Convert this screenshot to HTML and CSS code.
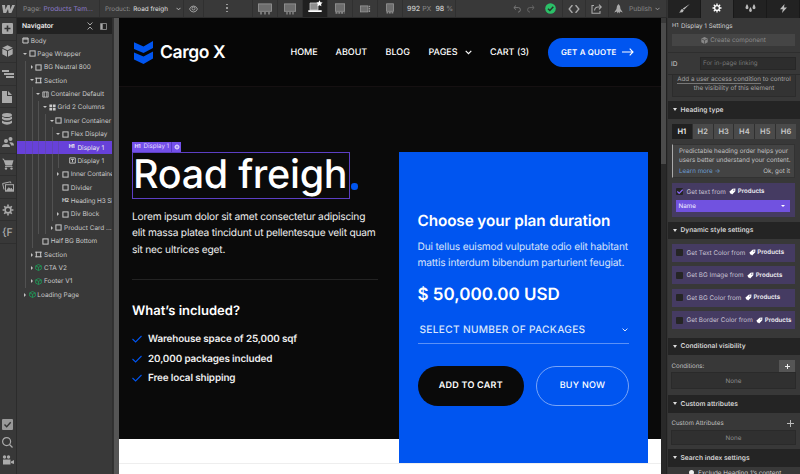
FILE: index.html
```html
<!DOCTYPE html>
<html lang="en">
<head>
<meta charset="utf-8">
<title>Designer</title>
<link rel="stylesheet" href="styles.css">
</head>
<body>
<svg width="0" height="0" class="defs">
<defs>
<symbol id="box" viewBox="0 0 7 7"><rect x=".9" y=".9" width="5.2" height="5.2" fill="none" stroke="currentColor"/></symbol>
<symbol id="body" viewBox="0 0 7 7"><path d="M.9 1h5.2v5H.9zM.9 2h5.2" fill="none" stroke="currentColor"/></symbol>
<symbol id="sec" viewBox="0 0 7 7"><path d="M.3 1.2h6.4M.3 5.8h6.4M1.3.8v5.4M5.7.8v5.4" fill="none" stroke="currentColor"/></symbol>
<symbol id="cont" viewBox="0 0 7 7"><path d="M.8.9h5.4v5.2H.8zM2.2 1v5M4.8 1v5" fill="none" stroke="currentColor" stroke-width=".8"/></symbol>
<symbol id="grid" viewBox="0 0 7 7"><path d="M.4.5h2.7v2.7H.4zM3.9.5h2.7v2.7H3.9zM.4 3.9h2.7v2.7H.4zM3.9 3.9h2.7v2.7H3.9z" fill="currentColor"/></symbol>
<symbol id="txt" viewBox="0 0 7 7"><path d="M.7.9h5.6v5.2H.7zM2 2.4h3M3.5 2.4v2.8" fill="none" stroke="currentColor" stroke-width=".9"/></symbol>
<symbol id="comp" viewBox="0 0 7 7"><path d="M3.5.5 6.3 1.9v3.2L3.5 6.5.7 5.1V1.9zM.7 1.9l2.8 1.4 2.8-1.4M3.5 3.3v3.2" fill="none" stroke="currentColor" stroke-width=".8"/></symbol>
<symbol id="gear" viewBox="0 0 12 12"><g fill="none" stroke="currentColor"><circle cx="6" cy="6" r="2.9" stroke-width="1.6"/><path d="M6 .6v2M6 9.4v2M.6 6h2M9.4 6h2M2.2 2.2l1.4 1.4M8.4 8.4l1.4 1.4M2.2 9.8l1.4-1.4M8.4 3.6l1.4-1.4" stroke-width="1.6"/></g></symbol>
<symbol id="tag" viewBox="0 0 7 7"><path d="M3.6.7 6.4.5 6.3 3.3 3.1 6.4 2 5.4 1.2 5.6.9 4.6.3 3.8z" fill="currentColor"/><circle cx="4.8" cy="2.1" r=".65" fill="#453b62"/></symbol>
<symbol id="check" viewBox="0 0 10 8"><path d="M.5 4 3.6 7 9.5 1" fill="none" stroke="currentColor" stroke-width="1.1"/></symbol>
<symbol id="chev" viewBox="0 0 6 4"><path d="M.6.6 3 3 5.4.6" fill="none" stroke="currentColor"/></symbol>
</defs>
</svg>
<div class="app">
<div class="left">
  <header class="top">
    <div class="w"><svg width="13" height="8" viewBox="0 0 13 8"><path d="M0 0h3l.4 4.6L5.5 0h2.3l.5 4.6L10.2 0H13L9.4 8H6.7L6 4 4.1 8H1.3z" fill="#aaa"/></svg></div>
    <div class="pg"><span class="t-page">Page:</span><span class="t-name">Products Tem...</span></div>
    <div class="prod"><span class="t-prod">Product:</span><span class="t-road">Road freigh</span><svg width="5" height="4"><use href="#chev"/></svg></div>
    <div class="eye"><svg width="9" height="8" viewBox="0 0 9 8" fill="none" stroke="#aaa" stroke-width=".9"><path d="M.5 4Q1.8 1 4.5 1T8.5 4Q7.200 7 4.5 7T.5 4z"/><circle cx="4.500" cy="3.500" r="1.500"/></svg></div>
    <div class="dots"><i></i><i></i><i></i></div>
    <div class="dev"><svg width="14" height="12" viewBox="0 0 14 12"><rect x=".4" y=".9" width="13.200" height="7.400" fill="#6d6d6d" stroke="#999" stroke-width=".8"/><path d="M3 9v2.500M7 9v2.500M11 9v2.500" stroke="#777" stroke-width="2"/></svg></div>
    <div class="dev"><svg width="12" height="12" viewBox="0 0 12 12"><rect x=".4" y=".9" width="11.200" height="7.400" fill="#6d6d6d" stroke="#999" stroke-width=".8"/><path d="M3 9v2.500M6 9v2.500M9 9v2.500" stroke="#777" stroke-width="1.800"/></svg></div>
    <div class="dev on"><svg width="15" height="14" viewBox="0 0 15 14"><path d="M2 3h8v7H2z" fill="#8e8e8e" stroke="#ccc" stroke-width=".8"/><path d="M.3 10.200h13.400v1.800H.3z" fill="#fff"/><path d="m11.500.3 1 1.900 2.100.4-1.500 1.500.3 2.200-1.900-1-2 1 .4-2.200L8.500 2.600l2-.4z" fill="#fff"/></svg></div>
    <div class="dev"><svg width="10" height="11" viewBox="0 0 10 11"><rect x=".4" y=".8" width="9.200" height="7.500" fill="#6d6d6d" stroke="#999" stroke-width=".8"/><path d="M.5 9.800h9" stroke="#888" stroke-width="1.800" stroke-dasharray="2 .8"/></svg></div>
    <div class="dev"><svg width="11" height="8" viewBox="0 0 11 8"><rect x=".4" y=".9" width="7.500" height="6" fill="#6d6d6d" stroke="#999" stroke-width=".8"/><path d="M9.400.7v6.500" stroke="#999" stroke-width="1.400" stroke-dasharray="1.600 .7"/></svg></div>
    <div class="dev"><svg width="8" height="11" viewBox="0 0 8 11"><rect x=".6" y=".8" width="6.800" height="7.500" fill="#6d6d6d" stroke="#999" stroke-width=".8"/><path d="M.5 9.800h7" stroke="#888" stroke-width="1.600" stroke-dasharray="1.800 .7"/></svg></div>
    <div class="size"><b>992</b><span>PX</span><b>98</b><span>%</span></div>
    <div class="undo"><svg width="8" height="8" viewBox="0 0 8 8" fill="none" stroke="#777"><path d="M3 .5.800 2.600 3 4.700M1 2.600h4.500Q7.400 2.600 7.400 4.800T5 7.200"/></svg><svg width="8" height="8" viewBox="0 0 8 8" fill="none" stroke="#666"><path d="M5 .5 7.200 2.600 5 4.700M7 2.600H2.500Q.6 2.600.6 4.800T3 7.200"/></svg></div>
    <div class="c1"><svg width="11" height="11" viewBox="0 0 11 11"><circle cx="5.500" cy="5.500" r="5.300" fill="#2bc168"/><path d="m3 5.700 1.900 1.800L8.300 3.800" fill="none" stroke="#24382c" stroke-width="1.500"/></svg></div>
    <div class="c2"><svg width="12" height="8" viewBox="0 0 12 8" fill="none" stroke="#aaa" stroke-width="1.400"><path d="M4.700.6H4L1.200 4 4 7.400h.7M7.300.6H8L10.800 4 8 7.400h-.7"/></svg></div>
    <div class="c3"><svg width="11" height="10" viewBox="0 0 11 10" fill="none" stroke="#aaa" stroke-width="1.100"><path d="M3 1.500H1v7.800h8V7M3.500 6.500Q4 3 7 3h3M8 .7 10.300 3 8 5.300"/></svg></div>
    <div class="pub"><svg width="9" height="10" viewBox="0 0 9 10"><path d="M4.500 0Q6.500 1.500 6.500 5L8.800 8.500 6 7.500 5.500 9.500 4.500 8 3.500 9.500 3 7.500.2 8.500 2.500 5Q2.500 1.500 4.500 0z" fill="#aaa"/></svg><span>Publish</span><svg width="5" height="4"><use href="#chev"/></svg></div>
  </header>
  <div class="work">
    <nav class="rail">
      <div><svg width="11" height="11" viewBox="0 0 11 11"><rect width="11" height="11" rx="1" fill="#a8a8a8"/><path d="M5.500 2.500v6M2.500 5.500h6" stroke="#333" stroke-width="1.600"/></svg></div>
      <div><svg width="11" height="12" viewBox="0 0 11 12"><path d="M5.500.3 10.700 2.700 5.500 5.200.3 2.700z" fill="#aaa"/><path d="M.3 3.800 5 6v5.700L.3 9.300zM10.700 3.800 6 6v5.700l4.700-2.400z" fill="#aaa"/></svg></div>
      <div><svg width="12" height="8" viewBox="0 0 12 8"><path d="M0 1h7M2 4h10M4 7h8" stroke="#aaa" stroke-width="1.900"/></svg></div>
      <div><svg width="10" height="12" viewBox="0 0 10 12"><path d="M0 0h5v5h5v7H0zM6 0l4 4H6z" fill="#aaa"/></svg></div>
      <div><svg width="10" height="12" viewBox="0 0 10 12" fill="#aaa"><ellipse cx="5" cy="2" rx="5" ry="2"/><path d="M0 3.600Q5 6.600 10 3.600V6Q5 9 0 6zM0 7.600Q5 10.600 10 7.600V10Q5 13.500 0 10z"/></svg></div>
      <div><svg width="12" height="10" viewBox="0 0 12 10" fill="#aaa"><circle cx="4" cy="4" r="2"/><circle cx="8.500" cy="2" r="2"/><path d="M0 10Q0 7 4 7T8 10zM8 6.500Q6.800 5.600 8 5.200 12 4.800 12 8.500H9Q9 7 8 6.500z"/></svg></div>
      <div><svg width="12" height="12" viewBox="0 0 12 12"><path d="M0 .8h2l.5 1.500H11.500L10 7.500H3.500L1.500 2z" fill="#aaa"/><path d="M3 8.600h7.500" stroke="#aaa"/><circle cx="4" cy="10.600" r="1.200" fill="#aaa"/><circle cx="9.500" cy="10.600" r="1.200" fill="#aaa"/></svg></div>
      <div><svg width="12" height="11" viewBox="0 0 12 11" fill="none" stroke="#aaa"><rect x="3.500" y="3.700" width="8" height="6.500"/><path d="M2 8.500 .6 2.500 8.500.8l.4 1.500"/><path d="m4.500 9.500 2.300-2.800 1.500 1.500 1-1 1.500 2.300z" fill="#aaa"/></svg></div>
      <div><svg width="12" height="12" color="#aaa"><use href="#gear"/></svg></div>
      <div class="f">{F</div>
      <div class="gap"></div>
      <div class="b"><svg width="11" height="11" viewBox="0 0 11 11"><rect width="11" height="11" rx="1" fill="#999"/><path d="m2.500 5.500 2.200 2.300L8.700 3.300" fill="none" stroke="#333" stroke-width="1.400"/></svg></div>
      <div class="b"><svg width="11" height="11" viewBox="0 0 11 11" fill="none" stroke="#aaa" stroke-width="1.200"><circle cx="4.600" cy="4.600" r="4"/><path d="m7.500 7.500 3 3"/></svg></div>
      <div class="b"><svg width="12" height="10" viewBox="0 0 12 10" fill="#aaa"><circle cx="2.500" cy="2" r="1.700"/><circle cx="6.500" cy="2" r="1.700"/><path d="M1 4.500h7.500V9.500H1zM9 6.500l3-1.500v4L9 8z"/></svg></div>
    </nav>
    <aside class="nav">
      <div class="nh"><b>Navigator</b><svg width="6" height="8" viewBox="0 0 6 8" fill="none" stroke="#bbb" stroke-width=".9"><path d="M.6.5 3 3 5.400.5M.6 7.500 3 5l2.400 2.500"/></svg><svg class="dock" width="7" height="7" viewBox="0 0 7 7"><path d="M.5.5h6v6h-6z" fill="none" stroke="#999" stroke-width=".8"/><path d="M1 1h1.700v5H1z" fill="#aaa"/></svg></div>
      <div class="row l0"><svg><use href="#body"/></svg><span>Body</span></div>
      <div class="row l1 open"><svg><use href="#box"/></svg><span>Page Wrapper</span></div>
      <div class="row l2 shut"><svg><use href="#box"/></svg><span>BG Neutral 800</span></div>
      <div class="row l2 open"><svg><use href="#sec"/></svg><span>Section</span></div>
      <div class="row l3 open"><svg><use href="#cont"/></svg><span>Container Default</span></div>
      <div class="row l4 open"><svg><use href="#grid"/></svg><span>Grid 2 Columns</span></div>
      <div class="row l5 open"><svg><use href="#box"/></svg><span>Inner Container</span></div>
      <div class="row l6 open"><svg><use href="#box"/></svg><span>Flex Display</span></div>
      <div class="row l7 sel"><em>H1</em><span>Display 1</span></div>
      <div class="row l7"><svg><use href="#txt"/></svg><span>Display 1</span></div>
      <div class="row l6 shut tight"><svg><use href="#box"/></svg><span>Inner Containe</span></div>
      <div class="row l6"><svg><use href="#box"/></svg><span>Divider</span></div>
      <div class="row l6 tight"><em>H2</em><span>Heading H3 Si</span></div>
      <div class="row l6 shut"><svg><use href="#box"/></svg><span>Div Block</span></div>
      <div class="row l5 shut"><svg><use href="#box"/></svg><span>Product Card ...</span></div>
      <div class="row l3"><svg><use href="#box"/></svg><span>Half BG Bottom</span></div>
      <div class="row l2 shut"><svg><use href="#sec"/></svg><span>Section</span></div>
      <div class="row l2 shut cm"><svg><use href="#comp"/></svg><span>CTA V2</span></div>
      <div class="row l2 shut cm"><svg><use href="#comp"/></svg><span>Footer V1</span></div>
      <div class="row l1 shut cm"><svg><use href="#comp"/></svg><span>Loading Page</span></div>
    </aside>
    <div class="gutter"></div>
    <main class="canvas">
      <div class="site-head">
        <svg class="mark" width="19" height="23" viewBox="0 0 19 23" fill="#0055f0"><path d="M0 1.200 9.500 5.500 19 0v7L9.500 12 0 8zM0 11.500l9.500 4 9.500-5v7L9.500 23 0 18.500z"/></svg>
        <span class="brand">Cargo X</span>
        <span class="m m1">HOME</span><span class="m m2">ABOUT</span><span class="m m3">BLOG</span><span class="m m4">PAGES</span><svg class="mc" width="7" height="5"><use href="#chev"/></svg><span class="m m5">CART (3)</span>
        <a class="quote"><span>GET A QUOTE</span><svg width="12" height="8" viewBox="0 0 12 8" fill="none" stroke="#fff" stroke-width="1.100"><path d="M0 4h11M7.700.7 11 4 7.700 7.300"/></svg></a>
      </div>
      <div class="hero">
        <section class="info">
          <div class="badge"><em>H1</em><span>Display 1</span><i><svg width="6" height="6"><use href="#gear"/></svg></i></div>
          <div class="title"><h1>Road freigh</h1><i></i></div>
          <div class="para"><p class="p1">Lorem ipsum dolor sit amet consectetur adipiscing</p><p class="p2">elit massa platea tincidunt ut pellentesque velit quam</p><p class="p3">sit nec ultrices eget.</p></div>
          <h2>What’s included?</h2>
          <ul>
            <li><svg width="10" height="8"><use href="#check"/></svg><span>Warehouse space of 25,000 sqf</span></li>
            <li><svg width="10" height="8"><use href="#check"/></svg><span>20,000 packages included</span></li>
            <li><svg width="10" height="8"><use href="#check"/></svg><span>Free local shipping</span></li>
          </ul>
        </section>
        <section class="card">
          <h3>Choose your plan duration</h3>
          <p class="q1">Dui tellus euismod vulputate odio elit habitant</p><p class="q2">mattis interdum bibendum parturient feugiat.</p>
          <div class="price">$ 50,000.00 USD</div>
          <div class="select"><span>SELECT NUMBER OF PACKAGES</span><svg width="6" height="4"><use href="#chev"/></svg></div>
          <div class="btns"><a class="add"><span>ADD TO CART</span></a><a class="buy"><span>BUY NOW</span></a></div>
        </section>
      </div>
    </main>
    <div class="scroll"><div class="up"></div><div class="thumb"></div></div>
  </div>
</div>
<aside class="panel">
  <div class="tabs">
    <div><svg width="11" height="9" viewBox="0 0 11 9" fill="#bbb"><path d="M10.800 0 5 5.800 3.800 4.500zM3.300 4.900l1.500 1.500Q4 9 0 8.500 1.700 7.500 1.600 6.500 1.900 4.900 3.300 4.900z"/></svg></div>
    <div class="on"><svg width="10" height="10" color="#fff"><use href="#gear"/></svg></div>
    <div><svg width="11" height="8" viewBox="0 0 11 8" fill="#bbb"><path d="M2 0q3 4.800 0 5.200Q-1 4.800 2 0zM9 0q3 4.800 0 5.200Q6 4.800 9 0zM5.500 3q2.800 4.500 0 5Q2.700 7.500 5.500 3z"/></svg></div>
    <div><svg width="7" height="9" viewBox="0 0 7 9" fill="#bbb"><path d="M4.500 0 0 5.200h2.800L2 9l5-5.500H4z"/></svg></div>
  </div>
  <div class="phead"><em>H1</em><span>Display 1 Settings</span></div>
  <div class="create"><svg width="7" height="7" viewBox="0 0 7 7"><path d="M3.500 0 6.700 1.600v3.600L3.500 7 .3 5.200V1.600z" fill="#888"/><path d="m.5 1.900 3 1.400 3-1.400M3.500 3.300V7" stroke="#454545" fill="none" stroke-width=".7"/></svg><span>Create component</span></div>
  <div class="idrow"><label>ID</label><div class="inp"><span>For in-page linking</span></div></div>
  <div class="access"><p><u>Add a user access condition</u> to control</p><p class="a2">the visibility of this element</p></div>
  <div class="bar"><span class="h-a">Heading type</span></div>
  <div class="seg"><b class="on">H1</b><b>H2</b><b>H3</b><b>H4</b><b>H5</b><b>H6</b></div>
  <div class="tip"><p>Predictable heading order helps your</p><p>users better understand your content.</p><div><a>Learn more →</a><span>Ok, got it</span></div></div>
  <div class="bind"><div class="br"><i class="cb ck"><svg width="6" height="5" viewBox="0 0 10 8"><path d="M.5 4 3.600 7 9.500 1" fill="none" stroke="#8d6bff" stroke-width="2"/></svg></i><span>Get text from</span><svg width="7" height="7"><use href="#tag"/></svg><b>Products</b></div><div class="dd"><span>Name</span></div></div>
  <div class="bar"><span class="h-b">Dynamic style settings</span></div>
  <div class="binds">
    <div class="br"><i class="cb"></i><span>Get Text Color from</span><svg width="7" height="7"><use href="#tag"/></svg><b>Products</b></div>
    <div class="br"><i class="cb"></i><span>Get BG Image from</span><svg width="7" height="7"><use href="#tag"/></svg><b>Products</b></div>
    <div class="br"><i class="cb"></i><span>Get BG Color from</span><svg width="7" height="7"><use href="#tag"/></svg><b>Products</b></div>
    <div class="br"><i class="cb"></i><span>Get Border Color from</span><svg width="7" height="7"><use href="#tag"/></svg><b>Products</b></div>
  </div>
  <div class="bar"><span class="h-c">Conditional visibility</span></div>
  <div class="crow"><span>Conditions:</span><i class="plus box"></i></div>
  <div class="none n1">None</div>
  <div class="bar"><span class="h-d">Custom attributes</span></div>
  <div class="crow cu"><span>Custom Attributes</span><i class="plus"></i></div>
  <div class="none n2">None</div>
  <div class="bar last"><span class="h-e">Search index settings</span></div>
  <div class="cut"><i></i><span>Exclude Heading 1’s content</span></div>
</aside>
</div>
</body>
</html>
```
FILE: styles.css
```css
* { box-sizing: border-box; }
body { margin: 0; width: 800px; height: 474px; overflow: hidden; background: #383838; font-family: Inter, sans-serif; color: #d0d0d0; font-size: 6.5px; text-rendering: geometricPrecision; }
.defs { position: absolute; }
h1, h2, h3, p, ul { margin: 0; padding: 0; }
span, b, em, p, h1, h2, h3, u { white-space: nowrap; }
em { font-style: normal; }
svg { flex: none; display: block; }
.app { display: flex; height: 474px; }
.left { width: 667px; display: flex; flex-direction: column; }

/* Top bar */
.top { height: 18px; flex: none; display: flex; background: #393939; border-bottom: 1px solid #2b2b2b; padding-bottom: 2px; }
.top > div { display: flex; align-items: center; flex: none; border-right: 1px solid #303030; height: 17px; }
.w { width: 17px; padding-left: 2px; }
.pg { width: 83px; padding-left: 6px; gap: 2.500px; font-size: 6.700px; }
.t-page { color: #8e8e8e; }
.t-name { color: #8d7ccc; }
.prod { width: 84px; padding-left: 5px; font-size: 6.350px; gap: 3px; }
.t-prod { color: #8e8e8e; }
.t-road { color: #e2e2e2; }
.prod svg { margin-left: 5px; }
.eye { width: 20px; padding-left: 5px; }
.top .dots { width: 49px; flex-direction: column; justify-content: center; gap: 2px; padding: 0 0 1px 22px; }
.dots i { width: 1.500px; height: 1.500px; background: #999; }
.top .dev { width: 25px; justify-content: center; }
.top .dev.on { background: #202020; align-items: flex-start; }
.size { width: 53px; padding-left: 4px; font-size: 7px; gap: 2px; color: #888; }
.size b { font-weight: 500; color: #ccc; }
.size b:nth-of-type(2) { margin-left: 2px; }
.top .undo { gap: 6px; padding-left: 57px; width: 85px; border: 0; }
.c1 { width: 22px; padding-left: 4px; }
.c2 { width: 23px; padding-left: 5px; }
.c3 { width: 23px; padding-left: 5px; }
.pub { flex: 1 !important; padding-left: 5px; gap: 6px; font-size: 6.700px; color: #888; }
.pub svg:last-child { margin-left: -3px; color: #aaa; }
.top .dots { align-items: flex-start; }

.work { display: flex; flex: 1; min-height: 0; }

/* Tool rail */
.rail { width: 17px; background: #383838; border-right: 1px solid #2c2c2c; display: flex; flex-direction: column; }
.rail > div { height: 22.6px; flex: none; border-bottom: 1px solid #2f2f2f; display: flex; align-items: center; padding-left: 2px; }
.rail .f { color: #aaa; font-size: 10.5px; font-weight: 500; }
.rail .gap { flex: 1; border: 0; }
.rail .b { height: 18px; border: 0; }
.rail .b:last-child { margin-bottom: 5px; }

/* Navigator */
.nav { width: 96px; background: #393939; overflow: hidden; border-right: 1px solid #303030; }
.nh { height: 16px; background: #222; display: flex; align-items: center; padding-left: 5px; color: #eee; font-size: 6.7px; margin-bottom: -.2px; }
.nh b { font-weight: 600; width: 65px; }
.dock { margin-left: 7px; }
.row { --x: calc(var(--l) * 6.68px); height: 13.38px; display: flex; align-items: center; padding-left: calc(5px + var(--x)); font-size: 6.45px; color: #cacaca; position: relative; }
.row svg, .row em { width: 7px; height: 7px; margin-right: 1.700px; flex: none; }
.row em { font-size: 5.5px; font-weight: 700; line-height: 7px; letter-spacing: -.6px; }
.row::before { content: ""; position: absolute; left: 8px; top: 0; bottom: 0; width: calc(var(--x) - 12px); background: repeating-linear-gradient(90deg, #515151 0 1px, transparent 1px 6.68px); }
.l0 { --l: 0; } .l1 { --l: 1; } .l2 { --l: 2; } .l3 { --l: 3; } .l4 { --l: 4; } .l5 { --l: 5; } .l6 { --l: 6; } .l7 { --l: 7; }
.open::after, .shut::after { content: ""; position: absolute; left: calc(var(--x) - .7px); top: 5.500px; border: 2px solid transparent; border-top: 2.500px solid #c4c4c4; border-bottom: 0; }
.shut::after { left: calc(var(--x) + .3px); top: 4.700px; border: 2px solid transparent; border-left: 2.500px solid #c4c4c4; border-right: 0; }
.tight span { letter-spacing: -.12px; }
.sel { background: #6741d9; color: #eee; }
.sel::before { opacity: .25; }
.cm svg { color: #1f9d58; }
.gutter { width: 6px; background: #555; border-left: 1px solid #333; }

/* Canvas */
.canvas { width: 542px; background: #fff; overflow: hidden; color: #fff; }
.site-head { height: 69px; background: #060606; border-bottom: 1px solid #151011; display: flex; align-items: center; padding-left: 15px; }
.mark { margin-right: 7px; }
.brand { font-size: 17.500px; font-weight: 600; width: 130.500px; letter-spacing: -.4px; }
.m { font-size: 9px; font-weight: 500; }
.m1 { width: 45px; } .m2 { width: 50px; } .m3 { width: 43px; } .m4 { width: 36.500px; }
.mc { margin-right: 18px; }
.m5 { width: 57.500px; }
.quote { width: 100.500px; height: 29px; border-radius: 15px; background: #0055f0; display: flex; align-items: center; padding-left: 13.500px; font-size: 7.900px; font-weight: 600; letter-spacing: .2px; }
.quote span { width: 61px; }
.hero { height: 377px; display: flex; background: linear-gradient(#0a0a0a 352px, #fff 352px 376px, #eee 376px); }
.info { width: 280px; padding: 55px 0 0 13px; }
.badge { width: 49px; height: 10px; background: #7350ea; display: flex; align-items: center; font-size: 6.200px; line-height: 8px; color: #e3dcff; padding-left: 2.500px; }
.badge em { font-size: 5.500px; font-weight: 700; width: 9px; letter-spacing: -.4px; }
.badge i { margin-left: auto; width: 10px; height: 100%; border-left: 1px solid #5638bf; display: flex; align-items: center; justify-content: center; color: #fff; }
.title { display: flex; height: 47px; align-items: flex-end; }
.title h1 { width: 218px; height: 47px; border: 1px solid #5c3fc4; font-size: 39.500px; font-weight: 550; line-height: 43px; letter-spacing: -.3px; padding-left: 0; }
.title i { width: 6.500px; height: 6.500px; border-radius: 50%; background: #0055f0; margin: 0 0 9.500px 1px; }
.para { margin-top: 9.500px; height: 71.500px; width: 245.500px; border-bottom: 1px solid #232323; font-size: 10.200px; letter-spacing: -.2px; line-height: 16.500px; color: #eee; }
.info h2 { margin-top: 20.500px; font-size: 13px; line-height: 20px; font-weight: 600; }
.info ul { margin-top: 8.500px; list-style: none; }
.info li { display: flex; align-items: center; height: 19.800px; gap: 6px; font-size: 9.900px; font-weight: 600; color: #eee; letter-spacing: -.13px; }
.info li svg { color: #0055f0; }
.card { width: 249px; height: 311px; margin-top: 65px; background: #0055f0; padding: 58px 0 0 18.500px; }
.card h3 { font-size: 15.300px; line-height: 22px; font-weight: 600; margin-bottom: 6.500px; letter-spacing: -.1px; }
.card p { font-size: 10.200px; line-height: 16.500px; color: #d5e2fb; letter-spacing: -.17px; }
.price { font-size: 17px; font-weight: 600; line-height: 24px; margin-top: 11.500px; }
.select { width: 211.500px; height: 37px; display: flex; align-items: center; justify-content: space-between; border-bottom: 1.500px solid #5b91f6; padding: 9px 1px 0 2px; font-size: 10.200px; letter-spacing: .28px; font-weight: 500; color: #d9e5fc; }
.btns { display: flex; gap: 12px; margin-top: 22px; font-size: 9px; font-weight: 600; }
.btns a { display: flex; height: 39.500px; border-radius: 20px; align-items: center; justify-content: center; letter-spacing: .25px; }
.add { width: 106.500px; background: #0a0a0a; }
.buy { width: 93px; border: 1px solid #78a4f7; font-weight: 500; }

.scroll { width: 6px; background: #292929; border-right: 1px solid #222; }
.up { height: 5px; background: #393939; }
.thumb { height: 141px; background: #4b4b4b; width: 5px; }

/* Settings panel */
.panel { width: 133px; height: 474px; overflow: hidden; background: #383838; border-left: 1px solid #333; display: flex; flex-direction: column; }
.panel > div { flex: none; }
.tabs { height: 18px; display: flex; background: #222; }
.tabs div { flex: 1; display: flex; align-items: center; justify-content: center; border-right: 1px solid #191919; padding-bottom: 2px; }
.tabs .on { background: #383838; }
.phead { height: 16px; display: flex; align-items: center; padding-left: 4px; font-size: 6.250px; }
.phead em { font-size: 5.600px; width: 9px; }
.create { margin: 0 5px 0 4px; height: 12px; background: #454545; display: flex; align-items: center; justify-content: center; gap: 2px; color: #8a8a8a; font-size: 6.350px; }
.idrow { margin-top: 6px; height: 23px; border-top: 1px solid #2e2e2e; border-bottom: 1px solid #2b2b2b; display: flex; align-items: center; padding-left: 3px; }
.idrow label { width: 28.500px; }
.inp { width: 96px; height: 13px; border: 1px solid #272727; background: #2d2d2d; display: flex; align-items: center; padding-left: 2.500px; color: #777; font-size: 6.200px; }
.access { margin: 0 4px; height: 22px; background: #333; border: 1px solid #2c2c2c; border-top: 0; text-align: center; font-size: 6.250px; line-height: 9.300px; color: #a4a4a4; margin-bottom: 4px; }
.access u { text-decoration: none; border-bottom: 1px solid #777; }
.access p { height: 9.300px; margin-top: -.500px; }
.access .a2 { margin-top: 0; }
.bar { height: 17.500px; background: #242424; display: flex; align-items: center; padding-left: 5px; font-size: 6.650px; font-weight: 600; color: #d4d4d4; }
.bar::before { content: ""; border: 2.200px solid transparent; border-top: 3px solid #ddd; border-bottom: 0; margin-right: 3.500px; }
.seg { height: 15px; margin: 5px 4px 0; display: flex; gap: 1px; background: #303030; }
.seg b { flex: 1; background: #4a4a4a; font-size: 7.500px; font-weight: 600; display: flex; align-items: center; justify-content: center; color: #c8c8c8; }
.seg b.on { background: #202020; color: #eee; }
.tip { margin: 5px 5px 0 4px; height: 34px; background: #434343; border: 1px solid #323232; border-left: 1px solid #aaa; padding: 2.500px 4px 0 6px; font-size: 6.250px; line-height: 8.900px; color: #c0c0c0; }
.tip div { display: flex; justify-content: space-between; margin-top: 2px; }
.tip a { color: #6b9bd0; }
.bind { margin: 5.500px 5px 5px 4px; height: 33.500px; background: #453b62; padding: 0 5px 0 4px; }
.br { height: 17px; display: flex; align-items: center; font-size: 6.350px; color: #c8c3d2; }
.br b { font-weight: 600; color: #f0f0f4; font-size: 6.150px; }
.br span { margin-right: 3.500px; }
.br svg { margin-right: 1.500px; color: #fff; }
.cb { width: 7px; height: 7px; background: #252525; border-radius: 1px; margin-right: 3.500px; flex: none; display: flex; align-items: center; justify-content: center; }
.br .cb svg { margin: 0; }
.dd { height: 12px; background: #7152e0; display: flex; align-items: center; justify-content: space-between; padding: 0 5px 0 2.500px; font-size: 6.300px; color: #f0ecff; }
.dd::after { content: ""; border: 2.200px solid transparent; border-top: 2.700px solid #fff; border-bottom: 0; }
.binds { height: 98.500px; padding: 4.500px 5px 0 4px; display: flex; flex-direction: column; gap: 4.400px; }
.binds .br { height: 18.200px; background: #453b62; padding-left: 4px; }
.crow { height: 17px; padding: 5px 5px 0 3.500px; display: flex; justify-content: space-between; align-items: center; font-size: 6.150px; color: #c0c0c0; }
.plus { width: 7px; height: 7px; margin-right: 1px; background: linear-gradient(#bbb, #bbb) center / 7px 1px no-repeat, linear-gradient(#bbb, #bbb) center / 1px 7px no-repeat; }
.plus.box { width: 16px; height: 12px; margin: 0; background: linear-gradient(#eee, #eee) center / 5px 1px no-repeat, linear-gradient(#eee, #eee) center / 1px 5px no-repeat #555; }
.none { margin: 0 4px 0 3px; background: #303030; border: 1px solid #2a2a2a; display: flex; align-items: center; justify-content: center; font-size: 6.300px; color: #8c8c8c; }
.n1 { height: 17px; margin-bottom: 6px; }
.cu { height: 17.500px; }
.n2 { height: 15px; margin-bottom: 4px; }
.cut { display: flex; padding: 2px 0 0 21px; gap: 4px; font-size: 6.300px; line-height: 8px; align-items: center; }
.cut i { width: 5px; height: 5px; border-radius: 50%; background: #eee; }
```
